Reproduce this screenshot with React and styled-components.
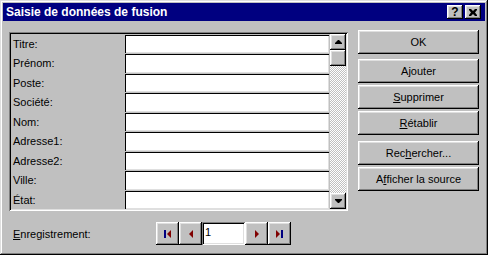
import React from "react";
import styled, { createGlobalStyle } from "styled-components";

const fields = [
  "Titre:",
  "Prénom:",
  "Poste:",
  "Société:",
  "Nom:",
  "Adresse1:",
  "Adresse2:",
  "Ville:",
  "État:",
];

const raised = `
  box-shadow: inset -1px -1px #000, inset 1px 1px #fff,
    inset -2px -2px #808080, inset 2px 2px #dfdfdf;
`;

function App() {
  return (
    <>
      <GlobalStyle />
      <Window>
        <TitleBar>
          <Title>Saisie de données de fusion</Title>
          <TitleButton>?</TitleButton>
          <TitleButton $gap>
            <svg width="8" height="7" viewBox="0 0 8 7">
              <path d="M0 0h2l2 2 2-2h2v1L6 3.5 8 6v1H6L4 5 2 7H0V6l2-2.5L0 1z" fill="#000" />
            </svg>
          </TitleButton>
        </TitleBar>
        <Body>
          <Panel>
            <FieldGrid>
              {fields.map((f) => (
                <React.Fragment key={f}>
                  <Label>{f}</Label>
                  <Field />
                </React.Fragment>
              ))}
            </FieldGrid>
            <ScrollBar>
              <ScrollButton>
                <svg width="7" height="4" viewBox="0 0 7 4">
                  <path d="M3 0h1l3 3v1H0V3z" fill="#000" />
                </svg>
              </ScrollButton>
              <Thumb />
              <Track />
              <ScrollButton>
                <svg width="7" height="4" viewBox="0 0 7 4">
                  <path d="M0 0h7v1L4 4H3L0 1z" fill="#000" />
                </svg>
              </ScrollButton>
            </ScrollBar>
          </Panel>
          <Buttons>
            <Button>OK</Button>
            <Button $top={5}>
              A<u>j</u>outer
            </Button>
            <Button>
              <u>S</u>upprimer
            </Button>
            <Button>
              <u>R</u>établir
            </Button>
            <Button $top={6}>
              Rec<u>h</u>ercher...
            </Button>
            <Button>
              A<u>f</u>ficher la source
            </Button>
          </Buttons>
        </Body>
        <Footer>
          <FooterLabel>
            <u>E</u>nregistrement:
          </FooterLabel>
          <NavButton>
            <svg width="7" height="8" viewBox="0 0 7 8">
              <rect x="0" y="0" width="2" height="8" fill="#000080" />
              <path d="M7 0v8L3 4z" fill="#800000" />
            </svg>
          </NavButton>
          <NavButton>
            <svg width="4" height="8" viewBox="0 0 4 8">
              <path d="M4 0v8L0 4z" fill="#800000" />
            </svg>
          </NavButton>
          <NavInput>1</NavInput>
          <NavButton>
            <svg width="4" height="8" viewBox="0 0 4 8">
              <path d="M0 0v8L4 4z" fill="#800000" />
            </svg>
          </NavButton>
          <NavButton>
            <svg width="7" height="8" viewBox="0 0 7 8">
              <path d="M0 0v8L4 4z" fill="#800000" />
              <rect x="5" y="0" width="2" height="8" fill="#000080" />
            </svg>
          </NavButton>
        </Footer>
      </Window>
    </>
  );
}

const GlobalStyle = createGlobalStyle`
  body {
    margin: 0;
    background: #c0c0c0;
    font-family: "Liberation Sans", Arial, sans-serif;
    font-size: 11px;
    color: #000;
  }
`;

const Window = styled.div`
  width: 488px;
  height: 255px;
  box-sizing: border-box;
  padding: 3px;
  background: #c0c0c0;
  display: flex;
  flex-direction: column;
  box-shadow: inset -1px -1px #000, inset 1px 1px #dfdfdf,
    inset -2px -2px #808080, inset 2px 2px #fff;
`;

const TitleBar = styled.div`
  height: 18px;
  background: #000080;
  display: flex;
  align-items: center;
  padding: 0 4px 0 3px;
`;

const Title = styled.div`
  flex: 1;
  color: #fff;
  font-weight: bold;
  font-size: 12px;
`;

const TitleButton = styled.div`
  width: 16px;
  height: 14px;
  margin-left: ${(p) => (p.$gap ? "2px" : "0")};
  background: #c0c0c0;
  ${raised}
  display: flex;
  align-items: center;
  justify-content: center;
  font-weight: bold;
  font-size: 12px;
  line-height: 14px;
`;

const Body = styled.div`
  display: flex;
  align-items: flex-start;
  padding: 9px 0 0 6px;
`;

const Panel = styled.div`
  width: 339px;
  height: 179px;
  margin-top: 2px;
  box-sizing: border-box;
  padding: 2px;
  display: flex;
  box-shadow: inset 1px 1px #808080, inset -1px -1px #fff,
    inset 2px 2px #000, inset -2px -2px #dfdfdf;
`;

const FieldGrid = styled.div`
  display: grid;
  grid-template-columns: 114px 204px;
  grid-template-rows: 19px 20px 19px 20px 19px 20px 19px 20px 19px;
`;

const Label = styled.div`
  display: flex;
  align-items: center;
  padding-left: 2px;
`;

const Field = styled.div`
  margin-top: 1px;
  background: #fff;
  box-shadow: inset 1px 1px #000, inset -1px -1px #dfdfdf;
`;

const ScrollBar = styled.div`
  width: 16px;
  margin-left: 1px;
  display: flex;
  flex-direction: column;
`;

const ScrollButton = styled.div`
  height: 16px;
  flex: none;
  background: #c0c0c0;
  ${raised}
  display: flex;
  align-items: center;
  justify-content: center;
`;

const Thumb = styled.div`
  height: 16px;
  flex: none;
  background: #c0c0c0;
  ${raised}
`;

const Track = styled.div`
  flex: 1;
  background: repeating-conic-gradient(#c0c0c0 0 25%, #fff 0 50%) 0 0 / 2px 2px;
`;

const Buttons = styled.div`
  display: flex;
  flex-direction: column;
  margin-left: 10px;
  width: 121px;
`;

const Button = styled.div`
  height: 24px;
  margin-top: ${(p) => p.$top ?? 2}px;
  &:first-child {
    margin-top: 0;
  }
  background: #c0c0c0;
  ${raised}
  display: flex;
  align-items: center;
  justify-content: center;
`;

const Footer = styled.div`
  display: flex;
  align-items: center;
  margin-top: 11px;
  padding-left: 10px;
`;

const FooterLabel = styled.div`
  width: 143px;
`;

const NavButton = styled.div`
  width: 23px;
  height: 23px;
  background: #c0c0c0;
  ${raised}
  display: flex;
  align-items: center;
  justify-content: center;
`;

const NavInput = styled.div`
  width: 43px;
  height: 23px;
  box-sizing: border-box;
  padding: 4px 3px;
  background: #fff;
  box-shadow: inset 1px 1px #808080, inset -1px -1px #fff,
    inset 2px 2px #000, inset -2px -2px #dfdfdf;
`;

export default App;
